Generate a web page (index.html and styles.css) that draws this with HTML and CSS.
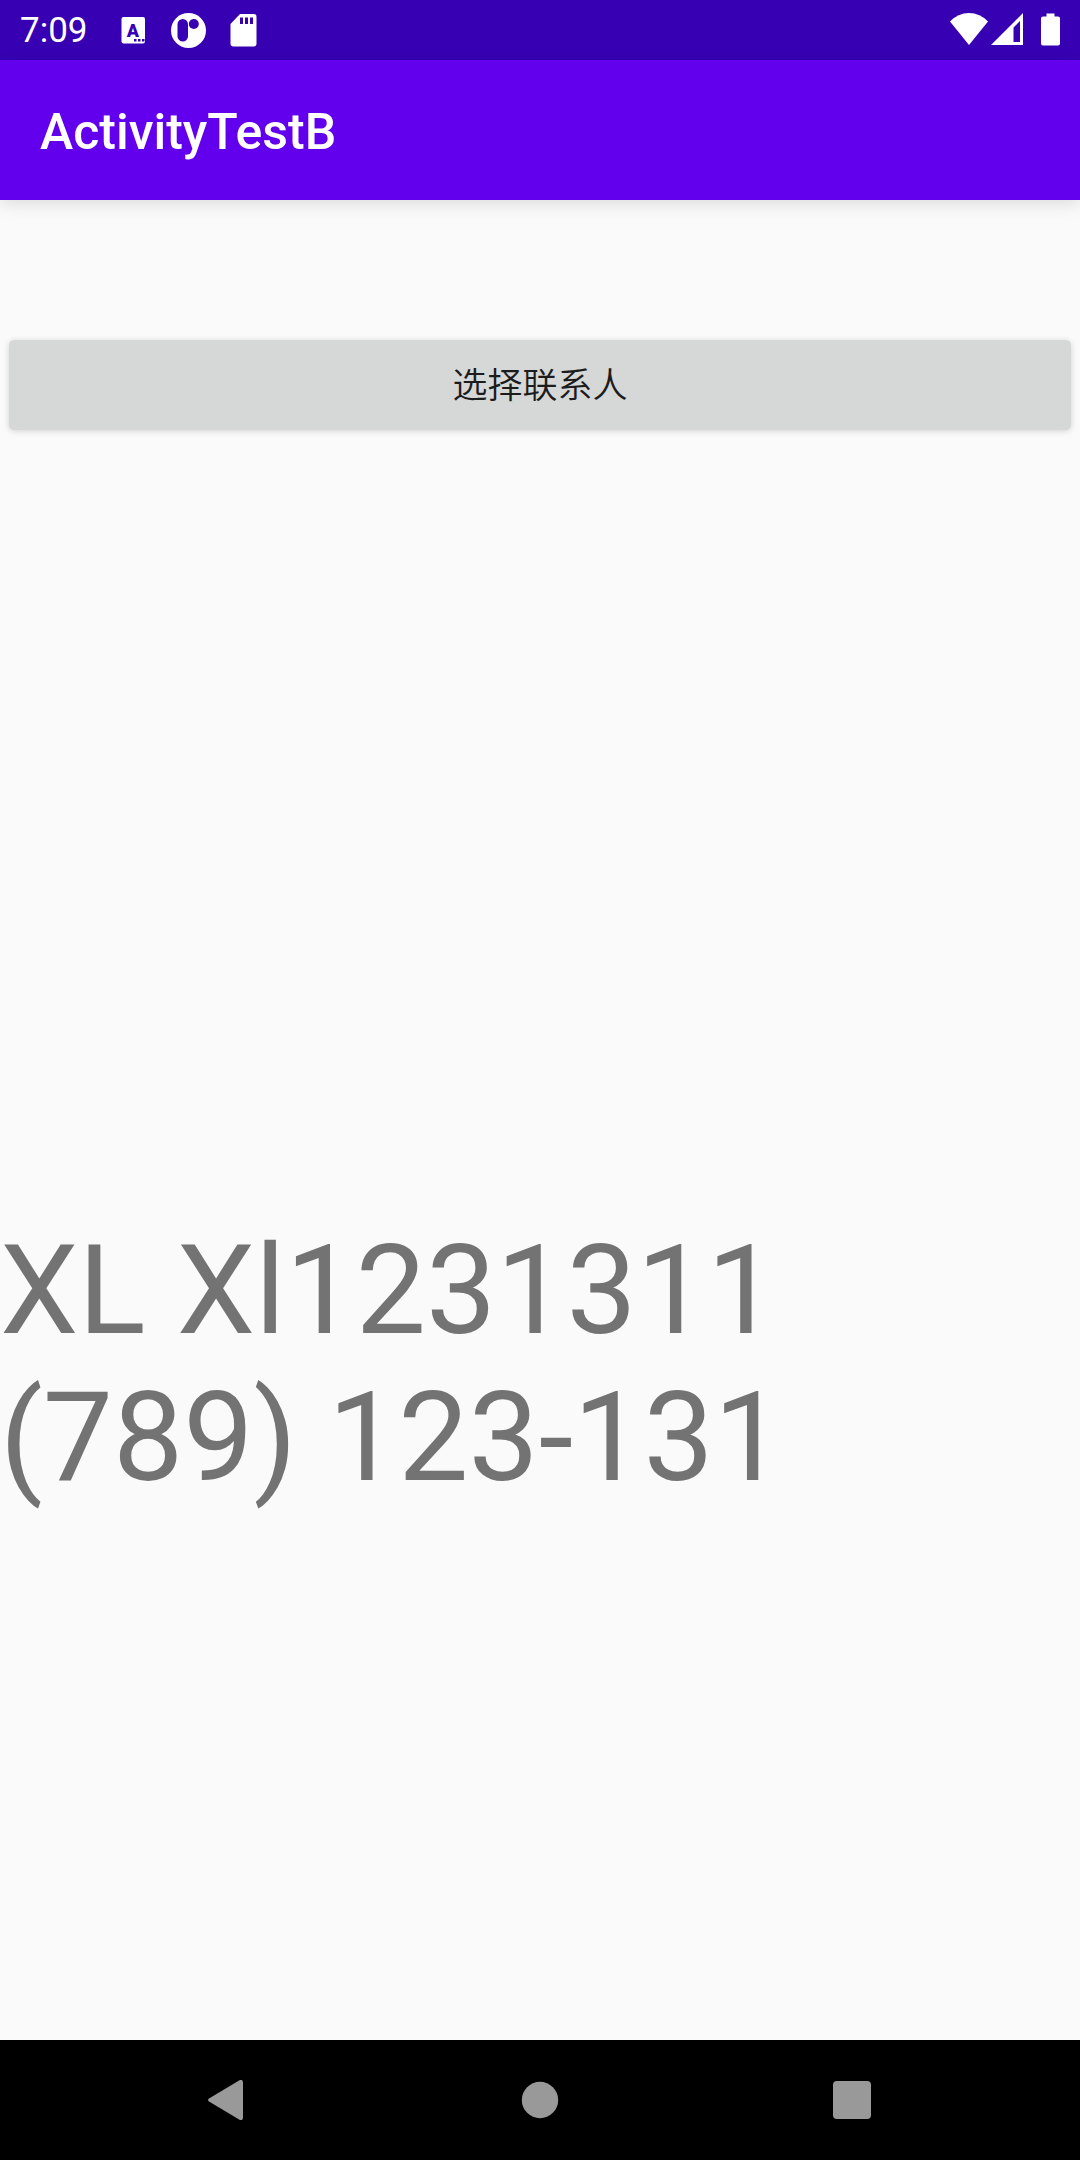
FILE: index.html
```html
<!DOCTYPE html>
<html lang="zh-CN">
<head>
  <meta charset="utf-8">
  <meta name="viewport" content="width=device-width, initial-scale=1">
  <title>ActivityTestB</title>
  <link rel="stylesheet" href="styles.css">
</head>
<body>
  <div class="screen">
    <div class="status-bar">
      <time class="clock">7:09</time>
      <div class="notifications">
        <svg class="icon" viewBox="0 0 40 60" aria-hidden="true">
          <rect x="8.500" y="17" width="23.500" height="26.500" rx="2"/>
          <text class="icon-letter" x="20" y="36.500" text-anchor="middle">A</text>
          <path class="cutout" d="M21 39h2.500v2.500h-2.500zM25 39h2.500v2.500h-2.500zM29 39h2.500v2.500h-2.500z"/>
        </svg>
        <svg class="icon" viewBox="0 0 40 60" aria-hidden="true">
          <circle cx="20.500" cy="30.500" r="17.500"/>
          <rect class="cutout" x="9.500" y="19" width="10.500" height="22.500" rx="5.250"/>
          <circle class="cutout" cx="25.800" cy="24" r="5"/>
        </svg>
        <svg class="icon" viewBox="0 0 40 60" aria-hidden="true">
          <path d="M17 14H30.500q3 0 3 3v26.500q0 3-3 3H10.500q-3 0-3-3V24z"/>
          <path class="cutout" d="M17 17.500h3v6.500h-3zM22 17.500h3v6.500h-3zM27 17.500h3v6.500h-3z"/>
        </svg>
      </div>
      <div class="system">
        <svg class="icon" viewBox="0 0 40 60" aria-hidden="true">
          <path d="M0 21.500Q8 13 19 13t19 8.500L19 45z"/>
        </svg>
        <svg class="icon" viewBox="0 0 40 60" aria-hidden="true">
          <path fill-rule="evenodd" d="M1 45L33 13v32zM23.500 27.500v14.500h6.500V21z"/>
        </svg>
        <svg class="icon battery" viewBox="0 0 32 60" aria-hidden="true">
          <path d="M6.500 13.500h8v3h3.500q2 0 2 2v25q0 2-2 2H3q-2 0-2-2v-25q0-2 2-2h3.500z"/>
        </svg>
      </div>
    </div>
    <header class="app-bar">
      <h1 class="title">ActivityTestB</h1>
    </header>
    <main class="content">
      <button class="pick-button" type="button">选择联系人</button>
      <p class="result">XL Xl1231311<br>(789) 123-131</p>
    </main>
    <nav class="nav-bar" aria-label="System">
      <button class="nav-button" type="button" aria-label="Back">
        <svg class="nav-icon" viewBox="0 0 40 40" aria-hidden="true"><path d="M31.500.3q3.500-1.300 3.500 2.200v35q0 3.500-3.500 2.200L1 21.500q-2-1.500 0-3z"/></svg>
      </button>
      <button class="nav-button" type="button" aria-label="Home">
        <svg class="nav-icon" viewBox="0 0 40 40" aria-hidden="true"><circle cx="20" cy="20" r="18.200"/></svg>
      </button>
      <button class="nav-button" type="button" aria-label="Overview">
        <svg class="nav-icon" viewBox="0 0 40 40" aria-hidden="true"><rect x="1" y="1" width="38" height="38" rx="4"/></svg>
      </button>
    </nav>
  </div>
</body>
</html>
```
FILE: styles.css
```css
:root {
  --primary: #6200ee;
  --primary-dark: #3700b3;
  --surface: #fafafa;
}

* {
  box-sizing: border-box;
}

body {
  margin: 0;
  background: var(--surface);
  font-family: Roboto, "Noto Sans CJK SC", sans-serif;
}

.screen {
  display: flex;
  flex-direction: column;
  min-height: 100vh;
}

.status-bar {
  display: flex;
  align-items: center;
  height: 60px;
  padding: 0 12px 0 20px;
  background: var(--primary-dark);
  color: #fff;
}

.clock {
  width: 93px;
  padding-top: 2px;
  font-size: 35px;
  line-height: 60px;
}

.notifications {
  display: flex;
  flex: 1;
  gap: 15px;
}

.system {
  display: flex;
}

.icon {
  display: block;
  width: 40px;
  height: 60px;
  fill: #fff;
}

.battery {
  width: 32px;
  margin-left: 10px;
  margin-right: -4px;
}

.cutout,
.icon-letter {
  fill: var(--primary-dark);
}

.icon-letter {
  font-size: 18px;
  font-weight: 900;
}

.app-bar {
  display: flex;
  align-items: center;
  height: 140px;
  padding: 4px 40px 0;
  background: var(--primary);
  color: #fff;
  box-shadow: 0 4px 16px rgba(0, 0, 0, 0.12);
}

.title {
  margin: 0;
  font-size: 50px;
  font-weight: 500;
  line-height: 60px;
}

.content {
  display: flex;
  flex: 1;
  flex-direction: column;
  padding-top: 140px;
}

.pick-button {
  height: 90px;
  margin: 0 9px;
  padding: 0 0 6px;
  border: 0;
  border-radius: 5px;
  background: #d6d7d7;
  box-shadow: 0 1px 6px rgba(0, 0, 0, 0.16);
  color: #1c1c1c;
  font: inherit;
  font-size: 35px;
  font-weight: 350;
}

.result {
  margin: 787px 0 0;
  color: #737373;
  font-size: 125px;
  line-height: 147px;
}

.nav-bar {
  display: grid;
  grid-template-columns: repeat(3, 1fr);
  height: 120px;
  padding: 0 72px;
  background: #000;
}

.nav-button {
  display: flex;
  align-items: center;
  justify-content: center;
  padding: 0;
  border: 0;
  background: none;
}

.nav-icon {
  width: 40px;
  height: 40px;
  fill: #999;
}
```
